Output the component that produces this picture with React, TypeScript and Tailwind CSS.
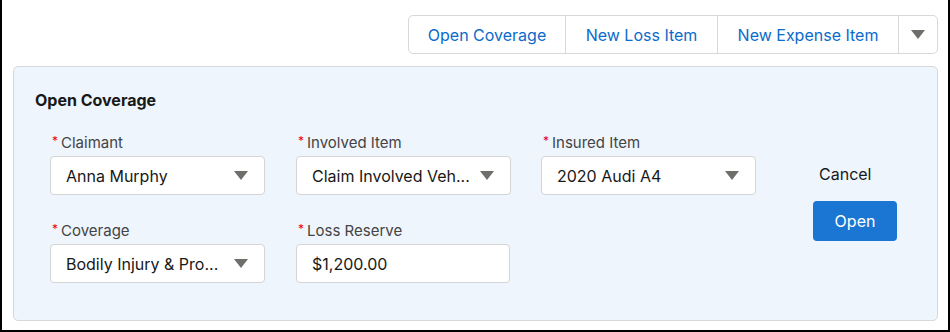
import React from "react";

const Caret = () => (
  <svg width="14" height="9" viewBox="0 0 14 9" className="shrink-0">
    <path d="M0 0 H14 L7 9 Z" fill="#706e6b" />
  </svg>
);

function Label({ text }: { text: string }) {
  return (
    <div className="h-[20px] flex items-center text-[15px] leading-[20px] text-[#444444] pl-[2px]">
      <span className="text-[#ea001e] text-[12px] mr-[3px] relative top-[-2px]">*</span>
      <span>{text}</span>
    </div>
  );
}

function Select({ value }: { value: string }) {
  return (
    <div className="mt-[3px] h-[39px] w-[215px] bg-white border border-[#d4d4d4] rounded-[4px] flex items-center pl-[15px] pr-[16px] justify-between">
      <span className="text-[16px] text-[#181818] truncate">{value}</span>
      <Caret />
    </div>
  );
}

function Input({ value }: { value: string }) {
  return (
    <div className="mt-[3px] h-[39px] w-[214px] bg-white border border-[#d4d4d4] rounded-[4px] flex items-center pl-[15px]">
      <span className="text-[16px] text-[#181818]">{value}</span>
    </div>
  );
}

export default function App() {
  return (
    <div
      className="w-[950px] h-[332px] bg-white border-l-2 border-r-2 border-b-2 border-black pl-[11px] pr-[10px] pt-[15px]"
      style={{ fontFamily: "Inter, 'Noto Sans', sans-serif" }}
    >
      <div className="flex justify-end">
        <div className="flex h-[39px] border border-[#d8d8d8] rounded-[5px] bg-white text-[16px] text-[#0b6bcb]">
          <div className="w-[157px] flex items-center justify-center border-r border-[#d8d8d8]">Open Coverage</div>
          <div className="w-[152px] flex items-center justify-center border-r border-[#d8d8d8]">New Loss Item</div>
          <div className="w-[181px] flex items-center justify-center border-r border-[#d8d8d8]">New Expense Item</div>
          <div className="w-[38px] flex items-center justify-center">
            <Caret />
          </div>
        </div>
      </div>
      <div className="mt-[12px] h-[255px] bg-[#eef5fd] border border-[#d8d8d8] rounded-[5px] pt-[23px] pl-[21px]">
        <div className="text-[16px] font-bold text-[#181818] leading-[20px]">Open Coverage</div>
        <div className="flex mt-[23px] pl-[15px]">
          <div className="grid grid-cols-[215px_214px_214px] gap-x-[31px] gap-y-[26px]">
            <div>
              <Label text="Claimant" />
              <Select value="Anna Murphy" />
            </div>
            <div>
              <Label text="Involved Item" />
              <Select value="Claim Involved Veh..." />
            </div>
            <div>
              <Label text="Insured Item" />
              <Select value="2020 Audi A4" />
            </div>
            <div>
              <Label text="Coverage" />
              <Select value="Bodily Injury & Pro..." />
            </div>
            <div>
              <Label text="Loss Reserve" />
              <Input value="$1,200.00" />
            </div>
          </div>
          <div className="ml-[58px] pt-[30px] flex flex-col items-start">
            <div className="ml-[6px] text-[16px] leading-[22px] text-[#181818]">Cancel</div>
            <div className="mt-[16px] w-[84px] h-[40px] bg-[#1b76d3] rounded-[4px] flex items-center justify-center text-white text-[16px]">
              Open
            </div>
          </div>
        </div>
      </div>
    </div>
  );
}
